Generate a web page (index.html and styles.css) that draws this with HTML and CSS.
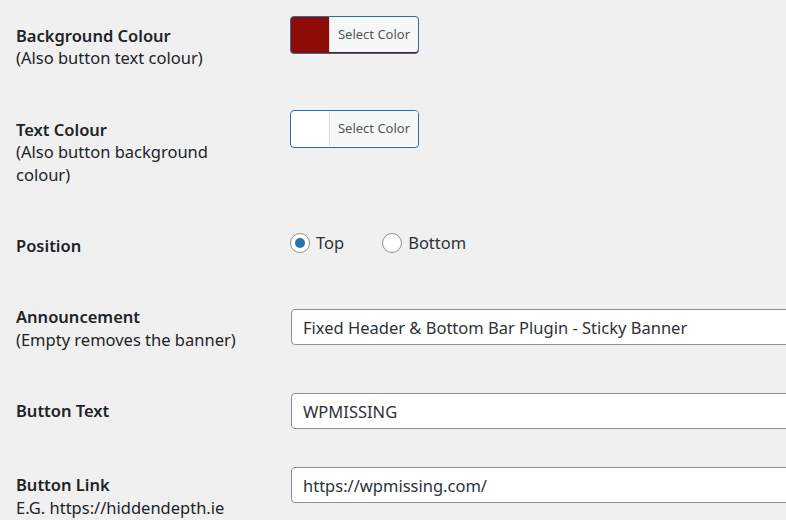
FILE: index.html
```html
<!DOCTYPE html>
<html>
<head>
    <title>Sticky Banner Settings</title>
    <link rel="stylesheet" href="styles.css">
</head>

<body>
    <div class="form-table">
        <div class="form-row">
            <div class="form-label">Background Colour<br><span class="note">(Also button text colour)</span></div>
            <div class="form-field field-colour">
                <button class="color-result swatch-red" type="button"><span class="color-result-text">Select Color</span></button>
            </div>
        </div>

        <div class="form-row">
            <div class="form-label">Text Colour<br><span class="note">(Also button background colour)</span></div>
            <div class="form-field field-colour">
                <button class="color-result swatch-white" type="button"><span class="color-result-text">Select Color</span></button>
            </div>
        </div>

        <div class="form-row">
            <div class="form-label">Position</div>
            <div class="form-field field-radio">
                <label class="radio"><input type="radio" name="position" value="top" checked> Top</label>
                <label class="radio"><input type="radio" name="position" value="bottom"> Bottom</label>
            </div>
        </div>

        <div class="form-row">
            <div class="form-label">Announcement<br><span class="note">(Empty removes the banner)</span></div>
            <div class="form-field field-announcement">
                <input class="regular-text" type="text" value="Fixed Header &amp; Bottom Bar Plugin - Sticky Banner">
            </div>
        </div>

        <div class="form-row">
            <div class="form-label">Button Text</div>
            <div class="form-field">
                <input class="regular-text" type="text" value="WPMISSING">
            </div>
        </div>

        <div class="form-row">
            <div class="form-label">Button Link<br><span class="note">E.G. https://hiddendepth.ie</span></div>
            <div class="form-field">
                <input class="regular-text" type="text" value="https://wpmissing.com/">
            </div>
        </div>
    </div>
</body>
</html>
```

FILE: styles.css
```css
html {
    overflow: hidden;
}
body {
    font-family: "Noto Sans", "Open Sans", sans-serif;
    font-size: 16.5px;
    margin: 0;
    padding: 0 0 0 16px;
    background-color: #f0f0f1;
    color: #1d2327;
}
.form-row {
    display: grid;
    grid-template-columns: 274px 1fr;
    align-items: start;
}
.form-label {
    width: 230px;
    padding: 25px 0 24px;
    line-height: 22.4px;
    font-weight: 600;
}
.note {
    font-weight: 400;
}
.form-field {
    padding: 18px 0 20px;
    overflow: hidden;
}
.field-colour {
    padding-top: 16px;
}
.field-radio {
    padding-top: 22px;
    display: flex;
    align-items: center;
    gap: 38px;
    line-height: 22.4px;
}
.field-announcement {
    padding-top: 28px;
}

/* colour picker button */
.color-result {
    display: flex;
    justify-content: flex-end;
    align-items: flex-start;
    width: 129px;
    height: 38px;
    padding: 0 0 0 38px;
    margin: 0;
    border: 1px solid #2271b1;
    border-radius: 4px;
    cursor: pointer;
    font-family: inherit;
}
.swatch-red {
    background-color: #8e0a04;
}
.swatch-white {
    background-color: #fff;
}
.color-result-text {
    flex: 1;
    height: 35px;
    line-height: 35px;
    background: #f6f7f7;
    border-left: 1px solid #dcdcde;
    border-radius: 0 3px 3px 0;
    color: #50575e;
    font-size: 13px;
    text-align: center;
}

/* radios */
.radio {
    display: flex;
    align-items: center;
    gap: 6px;
    color: #2c3338;
    cursor: pointer;
}
.radio input {
    appearance: none;
    -webkit-appearance: none;
    width: 20px;
    height: 20px;
    margin: 0;
    border: 1px solid #8c8f94;
    border-radius: 50%;
    background: #fff;
    display: flex;
    align-items: center;
    justify-content: center;
}
.radio input:checked::before {
    content: "";
    width: 10px;
    height: 10px;
    border-radius: 50%;
    background: #2271b1;
}

/* text inputs */
.regular-text {
    display: block;
    width: 540px;
    height: 36px;
    margin: 0 0 0 1px;
    padding: 0 11px;
    box-sizing: border-box;
    border: 1px solid #8c8f94;
    border-radius: 4px;
    background: #fff;
    color: #2c3338;
    font-family: inherit;
    font-size: 16.5px;
}
```
